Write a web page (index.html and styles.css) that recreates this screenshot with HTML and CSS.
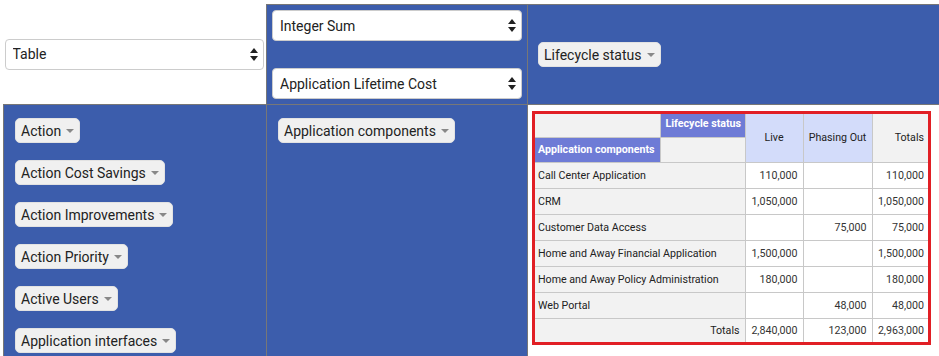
FILE: index.html
```html
<!DOCTYPE html>
<html lang="en">
<head>
  <meta charset="UTF-8" />
  <meta name="viewport" content="width=device-width, initial-scale=1.0"/>
  <title>Pivot Table</title>
  <link rel="stylesheet" href="styles.css">
</head>
<body>
  <table class="pvt-ui">
    <colgroup>
      <col class="col-left">
      <col class="col-mid">
      <col class="col-right">
    </colgroup>
    <tr>
      <td class="renderer-cell">
        <div class="select-box">
          <select><option>Table</option></select>
          <svg class="updown" width="8" height="13" viewBox="0 0 8 13"><polygon points="0,5 4,0 8,5"/><polygon points="0,8 4,13 8,8"/></svg>
        </div>
      </td>
      <td class="axis vals-cell">
        <div class="select-box">
          <select><option>Integer Sum</option></select>
          <svg class="updown" width="8" height="13" viewBox="0 0 8 13"><polygon points="0,5 4,0 8,5"/><polygon points="0,8 4,13 8,8"/></svg>
        </div>
        <div class="select-box">
          <select><option>Application Lifetime Cost</option></select>
          <svg class="updown" width="8" height="13" viewBox="0 0 8 13"><polygon points="0,5 4,0 8,5"/><polygon points="0,8 4,13 8,8"/></svg>
        </div>
      </td>
      <td class="axis cols-cell">
        <ul class="horiz-list">
          <li><span class="attr">Lifecycle status <svg class="caret" width="8" height="4" viewBox="0 0 8 4"><polygon points="0,0 8,0 4,4"/></svg></span></li>
        </ul>
      </td>
    </tr>
    <tr>
      <td class="axis unused-cell">
        <ul class="vert-list">
          <li><span class="attr">Action <svg class="caret" width="8" height="4" viewBox="0 0 8 4"><polygon points="0,0 8,0 4,4"/></svg></span></li>
          <li><span class="attr">Action Cost Savings <svg class="caret" width="8" height="4" viewBox="0 0 8 4"><polygon points="0,0 8,0 4,4"/></svg></span></li>
          <li><span class="attr">Action Improvements <svg class="caret" width="8" height="4" viewBox="0 0 8 4"><polygon points="0,0 8,0 4,4"/></svg></span></li>
          <li><span class="attr">Action Priority <svg class="caret" width="8" height="4" viewBox="0 0 8 4"><polygon points="0,0 8,0 4,4"/></svg></span></li>
          <li><span class="attr">Active Users <svg class="caret" width="8" height="4" viewBox="0 0 8 4"><polygon points="0,0 8,0 4,4"/></svg></span></li>
          <li><span class="attr">Application interfaces <svg class="caret" width="8" height="4" viewBox="0 0 8 4"><polygon points="0,0 8,0 4,4"/></svg></span></li>
        </ul>
      </td>
      <td class="axis rows-cell">
        <ul class="vert-list">
          <li><span class="attr">Application components <svg class="caret" width="8" height="4" viewBox="0 0 8 4"><polygon points="0,0 8,0 4,4"/></svg></span></li>
        </ul>
      </td>
      <td class="output-cell">
        <div class="pvt-frame">
          <table class="pvt-table">
            <colgroup>
              <col class="c-row">
              <col class="c-axis">
              <col class="c-live">
              <col class="c-phase">
              <col class="c-total">
            </colgroup>
            <thead>
              <tr class="h1">
                <th class="corner"></th>
                <th class="axis-label top">Lifecycle status</th>
                <th class="col-label" rowspan="2">Live</th>
                <th class="col-label" rowspan="2">Phasing Out</th>
                <th class="total-label last" rowspan="2">Totals</th>
              </tr>
              <tr class="h2">
                <th class="axis-label first">Application components</th>
                <th class="corner"></th>
              </tr>
            </thead>
            <tbody>
              <tr><th class="row-label" colspan="2">Call Center Application</th><td>110,000</td><td></td><td class="last">110,000</td></tr>
              <tr><th class="row-label" colspan="2">CRM</th><td>1,050,000</td><td></td><td class="last">1,050,000</td></tr>
              <tr><th class="row-label" colspan="2">Customer Data Access</th><td></td><td>75,000</td><td class="last">75,000</td></tr>
              <tr><th class="row-label" colspan="2">Home and Away Financial Application</th><td>1,500,000</td><td></td><td class="last">1,500,000</td></tr>
              <tr><th class="row-label" colspan="2">Home and Away Policy Administration</th><td>180,000</td><td></td><td class="last">180,000</td></tr>
              <tr><th class="row-label" colspan="2">Web Portal</th><td></td><td>48,000</td><td class="last">48,000</td></tr>
              <tr class="totals"><th class="total-label" colspan="2">Totals</th><td>2,840,000</td><td>123,000</td><td class="last">2,963,000</td></tr>
            </tbody>
          </table>
        </div>
      </td>
    </tr>
  </table>
</body>
</html>
```

FILE: styles.css
```css
body {
  margin: 0;
  padding: 4px 0 0 3px;
  font-family: Roboto, 'Liberation Sans', sans-serif;
  color: #222;
  background: #fff;
  overflow: hidden;
}

ul {
  list-style: none;
  margin: 0;
  padding: 0;
}

.pvt-ui {
  border-collapse: collapse;
  table-layout: fixed;
  width: 1000px;
}

.col-left { width: 263px; }
.col-mid { width: 261px; }
.col-right { width: 476px; }

.axis {
  background: #3c5dac;
  border: 1px solid #777;
  padding: 5px;
  vertical-align: top;
}

.renderer-cell {
  padding: 0 2px 0 1px;
  vertical-align: middle;
}

.select-box {
  position: relative;
}

.select-box select {
  -webkit-appearance: none;
  appearance: none;
  display: block;
  width: 100%;
  height: 31px;
  margin: 0;
  padding: 0 24px 0 7px;
  border: 1px solid #ccc;
  border-radius: 4px;
  background: #fff;
  color: #222;
  font-family: Roboto, 'Liberation Sans', sans-serif;
  font-size: 14px;
}

.updown {
  position: absolute;
  right: 6px;
  top: 9px;
  fill: #222;
  pointer-events: none;
}

.vals-cell .select-box + .select-box {
  margin-top: 27px;
}

.cols-cell {
  vertical-align: middle;
  padding-left: 4px;
}

.attr {
  display: inline-flex;
  align-items: center;
  gap: 5px;
  height: 25px;
  box-sizing: border-box;
  padding: 0 5px;
  background: #f0f0f0;
  border: 1px solid #e2e2e2;
  border-radius: 5px;
  font-size: 14px;
  color: #222;
  white-space: nowrap;
}

.caret {
  fill: #888;
}

.vert-list li {
  padding: 8px 6px 9px;
  line-height: 0;
}

.horiz-list li {
  display: inline-block;
  padding: 8px 6px;
  line-height: 0;
}

.output-cell {
  padding: 6px 0 0 4px;
  vertical-align: top;
  background: #fff;
}

.pvt-frame {
  display: inline-block;
  border: 3px solid #e11f25;
}

.pvt-table {
  border-collapse: collapse;
  border-style: hidden;
  table-layout: fixed;
  width: 393px;
  font-size: 8pt;
}

.c-row { width: 125px; }
.c-axis { width: 85px; }
.c-live { width: 58px; }
.c-phase { width: 69px; }
.c-total { width: 56px; }

.pvt-table th,
.pvt-table td {
  border: 1px solid #c8c8c8;
  padding: 0 5px;
  white-space: nowrap;
}

.pvt-table .h1 { height: 23px; }
.pvt-table .h2 { height: 25px; }
.pvt-table tbody tr { height: 26px; }
.pvt-table tbody tr.totals { height: 24px; }

.corner {
  background: #f2f2f2;
}

.axis-label {
  background: #6e7bd6;
  color: #fff;
  font-weight: bold;
  text-align: left;
}

.axis-label.top {
  vertical-align: top;
  padding-top: 3px;
}

.col-label {
  background: #d3dcfa;
  font-weight: normal;
  text-align: center;
  color: #222;
}

.row-label {
  background: #f2f2f2;
  font-weight: normal;
  text-align: left;
  color: #222;
}

.total-label {
  background: #f2f2f2;
  font-weight: normal;
  text-align: right;
  color: #222;
}

.pvt-table .first,
.pvt-table .row-label {
  padding-left: 3px;
}

.pvt-table .last {
  padding-right: 4px;
}

.pvt-table td {
  background: #fff;
  text-align: right;
  color: #333;
}
```
